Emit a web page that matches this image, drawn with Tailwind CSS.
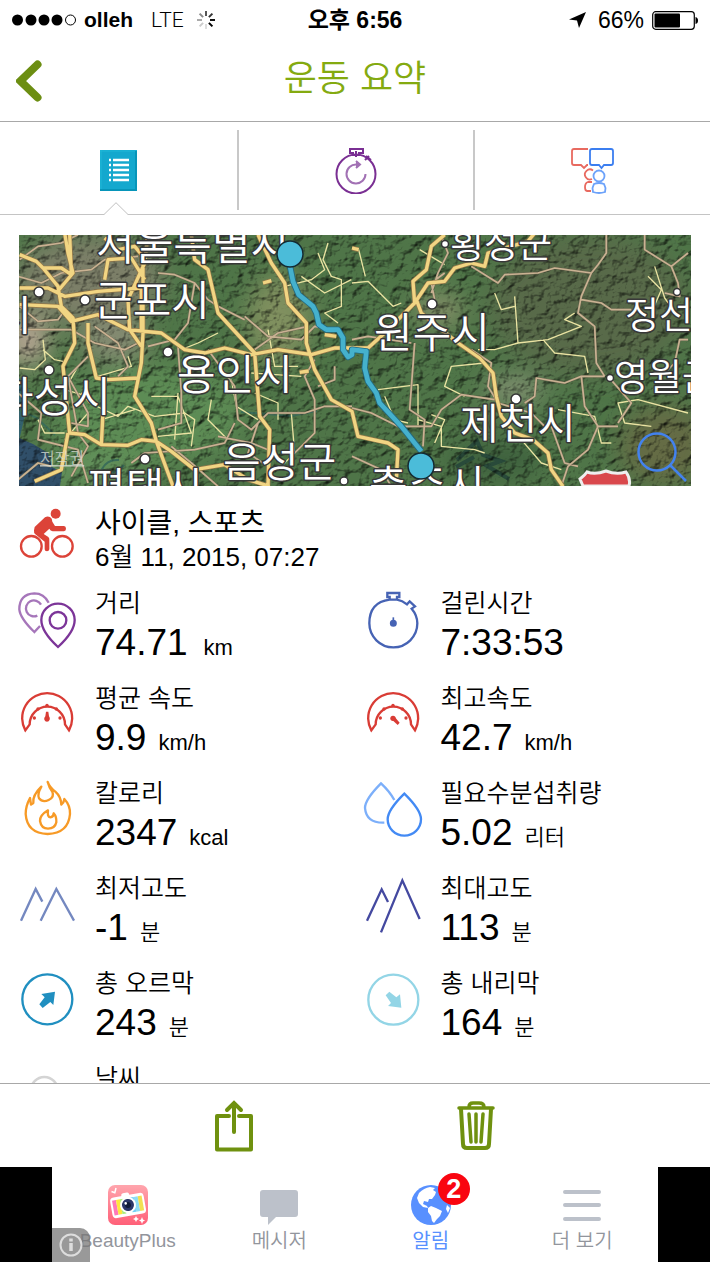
<!DOCTYPE html>
<html lang="ko">
<head>
<meta charset="utf-8">
<meta name="viewport" content="width=device-width, initial-scale=1">
<title>운동 요약</title>
<script src="https://cdn.jsdelivr.net/npm/@tailwindcss/browser@4"></script>
</head>
<body class="bg-white text-black font-['Liberation_Sans','Noto_Sans_CJK_KR',sans-serif]">
<div class="flex h-screen flex-col overflow-hidden">

  <!-- Status bar -->
  <div class="grid h-10 shrink-0 grid-cols-[1fr_auto_1fr] items-center px-3 text-[23px] leading-10">
    <div class="flex items-center">
      <svg class="h-3 w-16" viewBox="0 0 64 12" aria-hidden="true"><circle cx="5.500" cy="6" r="5.500"/><circle cx="19" cy="6" r="5.500"/><circle cx="32" cy="6" r="5.500"/><circle cx="45" cy="6" r="5.500"/><circle cx="58.500" cy="6" r="5" fill="none" stroke="#000"/></svg>
      <span class="ml-2 text-[21px] font-bold">olleh</span>
      <span class="ml-[18px] font-['Roboto'] text-[21px] font-light">LTE</span>
      <svg class="ml-3 size-5" viewBox="0 0 20 20" stroke-width="2" fill="none" aria-hidden="true"><path d="M10 1v5" stroke="#555"/><path d="M16.400 3.600l-3.500 3.500" stroke="#333"/><path d="M19 10h-5" stroke="#111"/><path d="M16.400 16.400l-3.500-3.500" stroke="#000"/><path d="M10 19v-5" stroke="#ddd"/><path d="M3.600 16.400l3.500-3.500" stroke="#ccc"/><path d="M1 10h5" stroke="#aaa"/><path d="M3.600 3.600l3.500 3.500" stroke="#888"/></svg>
    </div>
    <div class="font-bold">오후 6:56</div>
    <div class="flex items-center justify-end">
      <svg class="mr-3 h-4 w-[17px]" viewBox="0 0 17 16" aria-hidden="true"><path d="M17 0L0 7.500L8 8.500L10 16Z"/></svg>
      <span>66%</span>
      <svg class="ml-2 h-[19px] w-[46px]" viewBox="0 0 46 19" aria-hidden="true"><rect x=".7" y=".7" width="41.600" height="17.600" rx="3" fill="none" stroke="#000" stroke-width="1.200"/><rect x="2.500" y="2.500" width="25.500" height="14" rx="1"/><path d="M43.500 6q2.500.5 2.500 3.500t-2.500 3.500z"/></svg>
    </div>
  </div>

  <!-- Title bar -->
  <header class="grid h-[82px] shrink-0 grid-cols-[60px_1fr_60px] items-center border-b border-[#a8a8a8]">
    <button type="button" aria-label="뒤로" class="flex h-full items-center pl-4"><svg class="h-[42px] w-[26px]" viewBox="0 0 26 42"><path d="M21.500 4.500L4.500 21L21.500 37.500" fill="none" stroke="#6c8e12" stroke-width="8" stroke-linecap="round" stroke-linejoin="miter"/></svg></button>
    <h1 class="pb-1 text-center text-[36px] font-[350] leading-[44px] text-[#84aa10]">운동 요약</h1>
  </header>

  <!-- Section tabs -->
  <nav class="relative grid h-[93px] shrink-0 grid-cols-3 border-b border-[#c4c4c4] pt-2 pb-1">
    <button type="button" aria-label="요약" class="flex items-center justify-center">
      <svg class="h-[41px] w-[37px]" viewBox="0 0 37 41"><path fill="#14a8ce" d="M0 0h37v41H0z"/><path d="M0 1h37M1 0v41" stroke="#1fb8d8" stroke-width="1"/><path d="M36 1v39H0" stroke="#0795b9" fill="none" stroke-width="2"/><path d="M9 10h2M13 10h16M9 15h2M13 15h16M9 20h2M13 20h16M9 25h2M13 25h16M9 30h2M13 30h16" stroke="#fff" stroke-width="2.400"/></svg>
    </button>
    <button type="button" aria-label="랩 타임" class="flex items-center justify-center border-l-2 border-[#c8c8c8]">
      <svg class="h-[47px] w-[42px]" viewBox="0 0 42 47" fill="none" stroke="#7a2f93" stroke-width="2"><circle cx="21" cy="27" r="19.500"/><path d="M15 2h13v4h-4v2h-6v-2h-3zM21 4v6" /><path d="M31 9l5 4M30 13l4-4"/><g stroke="#a271b4"><path d="M21.500 17.500A9.500 9.500 0 1 0 30.500 27"/><path d="M21 14l4 3.500L21 21" fill="#a271b4"/></g></svg>
    </button>
    <button type="button" aria-label="소셜" class="flex items-center justify-center border-l-2 border-[#c8c8c8]">
      <svg class="h-[47px] w-[44px]" viewBox="0 0 44 47" fill="none" stroke-width="1.800"><g stroke="#e86a60"><path d="M17 2H3Q1 2 1 4V16Q1 18 3 18H10L13 21L16 18H17"/><path d="M22 23.500A5 5 0 1 0 21 32M21 35H17Q14 36 14 40Q14 44 16 44H20"/></g><path d="M21 2H40Q42 2 42 4V16Q42 18 40 18H33L30.500 21L28 18H21Q19 18 19 16V4Q19 2 21 2Z" stroke="#3b7ef0"/><g stroke="#6ca2fa"><circle cx="28" cy="29" r="5.500"/><path d="M23 37Q28 35 33 37L34.500 41L34 45Q28 47 22 45L21.500 41Z"/></g></svg>
    </button>
    <svg class="absolute -bottom-px left-[calc(16.666%-14px)] h-[13px] w-6" viewBox="0 0 24 13" aria-hidden="true"><path d="M0 12.500L12 .7L24 12.500V13H0Z" fill="#fff"/><path d="M0 12.500L12 .7L24 12.500" fill="none" stroke="#c0c0c0"/></svg>
  </nav>

  <!-- Workout summary -->
  <main class="min-h-0 flex-1 overflow-y-auto pt-5 [scrollbar-width:none]">
    <div class="px-[19px]">
      <svg class="block h-[251px] w-full" viewBox="0 0 672 251" preserveAspectRatio="xMidYMid slice" role="img" aria-label="운동 경로 지도">
        <defs>
          <filter id="terrain" x="0" y="0" width="100%" height="100%" color-interpolation-filters="sRGB">
            <feTurbulence type="fractalNoise" baseFrequency=".09 .11" numOctaves="4" seed="8" result="n"/>
            <feDiffuseLighting in="n" surfaceScale="3" diffuseConstant="1.250" lighting-color="#fff" result="l"><feDistantLight azimuth="225" elevation="52"/></feDiffuseLighting>
            <feBlend in="SourceGraphic" in2="l" mode="multiply"/>
          </filter>
          <filter id="soft" x="-30%" y="-30%" width="160%" height="160%"><feGaussianBlur stdDeviation="12"/></filter>
        </defs>
        <g filter="url(#terrain)">
          <rect width="672" height="251" fill="#4f7548"/>
          <g filter="url(#soft)">
            <ellipse cx="70" cy="45" rx="75" ry="45" fill="#7c7f68"/><ellipse cx="8" cy="105" rx="22" ry="26" fill="#b5a592"/><ellipse cx="95" cy="105" rx="35" ry="22" fill="#858b72"/><ellipse cx="260" cy="85" rx="32" ry="45" fill="#80905e"/><ellipse cx="130" cy="180" rx="95" ry="50" fill="#5d8c54"/><ellipse cx="60" cy="235" rx="60" ry="20" fill="#62905a"/><ellipse cx="420" cy="75" rx="25" ry="15" fill="#8b936c"/><ellipse cx="495" cy="155" rx="30" ry="12" fill="#8a9478"/><ellipse cx="570" cy="70" rx="100" ry="70" fill="#586a48"/><ellipse cx="645" cy="210" rx="45" ry="40" fill="#656c45"/><ellipse cx="475" cy="225" rx="50" ry="18" fill="#3c603c"/>
          </g>
          <path d="M0 143L10 155L6 180L0 206Z" fill="#33616d"/><path d="M0 203L14 209L29 218L33 232L43 237L41 251H0Z" fill="#304f69"/>
          <path d="M438 225L458 206L464 220L482 226L468 231L490 244M455 222L437 232" fill="none" stroke="#294a3a" stroke-width="4"/>
          <path d="M100 225q-12-1-17 9q12 8 22-4M0 175l18 8l18 17M222 177l50 4l26-5" fill="none" stroke="#3b6d59" stroke-width="2"/>
        </g>

        <!-- Roads: traced at three units per map pixel -->
        <g transform="translate(-1 -2) scale(.333333)" fill="none" stroke-linejoin="round">
          <g stroke="#eae3a2" stroke-width="4">
            <path d="M75 320L82 380L50 410L5 405M75 350L110 380L135 385M190 480L215 510L300 550L330 520L410 550M330 370L340 400L240 430M410 550L500 540L530 560L520 640M580 500L570 560L630 620M400 490H480L520 600L420 610M600 300L540 330L490 350M900 60L920 110L880 140L800 160M930 30L915 80L940 130L970 140V220L920 240L960 270M640 440L655 520L720 560M820 540L830 660L790 700M710 480L780 510V560M700 420L850 430M180 400L140 470L210 490M60 560L80 600L140 600M750 290L770 400L840 400M210 540L140 620M1000 140L920 180L850 130M480 480L470 620M350 530L250 560"/>
            <path d="M1002 150L1050 145L1125 220L1150 210M1022 50L1042 130M1205 50L1280 95M1490 190L1500 330L1430 350L1380 350M1500 330L1590 320L1690 280L1640 260L1670 240M1575 320L1610 360L1700 370L1710 420M1430 180L1450 230L1490 220M1400 390L1300 400L1280 460L1340 490M1080 470L1200 455V580M1900 580L1820 570L1800 510L1860 500L2010 540M1910 100L1940 195L1980 250M1200 560L1270 580V640L1370 650L1400 660M1240 545L1280 560L1250 630M1100 490L1130 560L1170 570M1900 240L1930 170L1890 130M1620 530L1730 550L1750 630L1780 630M1510 620L1570 690L1630 710"/>
          </g>
          <g stroke="#6c6651" stroke-width="7"><path id="minor" d="M5 220L60 265L120 260L145 225M5 80L60 40L130 30L180 5M5 290H160L230 330L320 350L360 330M0 130L70 150L130 120L220 110L260 80L360 70M230 280L300 330L330 400L300 430M210 370L150 430L210 540V580L160 570M420 120L470 125L530 150L570 200L600 220L680 260M530 150L510 270L470 320L390 340M480 340L490 480V570L420 590M570 350L650 460L660 560L700 590L750 540H860L920 520L1002 520M680 250L750 310L850 320L890 280L950 290M950 400V440L900 460M710 350L780 300L870 280M650 570L620 630L530 650L380 660L340 690M0 480L70 540L60 620L180 650L210 750M150 430L180 600L210 640L160 730M460 640L520 690L600 760M720 570L690 660L750 700M890 380L860 430L890 500V600L830 660M1002 320L1050 310L1180 330M1270 10L1290 60L1260 120L1240 180M1250 200L1240 150L1280 120M1360 100L1440 150L1460 125L1560 120L1610 105L1720 120L1690 190L1680 240L1730 280L1735 390L1760 430M1690 200L1750 210L1780 230L1840 230M1765 5V60L1740 95L1720 120M1880 5V50L1960 100L1980 150L1985 190L1940 180M1960 100L2010 60M1760 430L1690 430L1640 450L1555 435L1550 490L1520 510M1690 430L1700 520L1740 580L1710 650L1650 700L1630 760M1190 330L1175 530L1220 560L1215 640M1430 500L1330 485L1270 530L1240 580L1140 580L1060 540L1002 525M1600 580L1640 690L1680 700M2010 320H1985L1970 390L1930 430M1770 430L1840 510L1800 570M1360 350L1420 390L1410 460L1440 510L1540 540L1580 580M0 740L60 690L100 700M600 610L700 630L750 650M1002 670L1090 710L1120 760M1740 580L1800 580"/></g>
          <use href="#minor" stroke="#c9b292" stroke-width="5"/>
          <g stroke="#937749" stroke-width="14"><path id="major" d="M5 65L55 85L75 105H130L160 125L155 5M5 165H90L140 190L240 175L370 165V300M75 105L120 160L130 220L165 255L170 330L135 400L155 600L200 605L250 635L330 637L370 620L415 625L460 655L530 710L620 695L690 740L755 760M140 0L150 60L165 120L115 180M260 15L300 50L350 40L375 70V300L370 390L350 490L400 570L415 625L465 760M5 215L120 220L160 265L240 245L330 290L430 300L500 350L560 360L620 345L700 365L780 350L880 365L950 345H1002L1050 345L1100 300L1190 210L1185 145L1225 110L1240 40L1280 5M520 5L530 80L570 110L600 240L710 360L725 550L755 590L750 760M720 5L760 90L800 150L810 210L865 270V330L890 410L940 500L1002 535L1020 610L1110 630L1140 650L1135 740M210 270V330L235 435L270 440L360 435M260 440L250 635M390 5L380 90L330 200L335 290L370 340M260 140L270 80L340 75L380 140M150 600L130 710L50 745M1190 210L1230 150L1280 145L1310 105L1360 90L1400 100L1410 60L1530 25L1550 0M1195 200L1210 240L1320 330L1385 375L1425 420L1435 490L1450 550L1490 600L1545 620L1590 660L1600 710L1635 760M1002 45L1022 50M735 150L760 143M845 418L872 414M920 305L955 310"/></g>
          <use href="#major" stroke="#f1d583" stroke-width="10"/>
          <g stroke="#236980" stroke-width="19"><path id="route" d="M815 95L825 145L842 185L885 220L895 240L903 275L925 290L960 290L975 315V350L990 372L1002 365V350L1045 355L1040 405L1050 445L1075 480L1085 510L1150 580L1210 655"/></g>
          <use href="#route" stroke="#45b1cd" stroke-width="14"/>
        </g>

        <g fill="#fff" stroke="#333" stroke-width="1.500"><circle cx="20" cy="57" r="5"/><circle cx="66" cy="65" r="5"/><circle cx="149" cy="117" r="5"/><circle cx="30" cy="135" r="5"/><circle cx="126" cy="224" r="5"/><circle cx="413" cy="69" r="5"/><circle cx="426" cy="9" r="3.500"/><circle cx="497" cy="164" r="5"/><circle cx="591" cy="143" r="3.500"/><circle cx="658" cy="57" r="3.500"/><circle cx="325" cy="246" r="4"/></g>
        <g class="font-[350]" fill="#fff" stroke="#383838" stroke-width="3" stroke-linejoin="round" paint-order="stroke" font-size="42">
          <text x="77" y="25">서울특별시</text>
          <text x="75" y="81">군포시</text>
          <text x="-103" y="96">안산시</text>
          <text x="158" y="155">용인시</text>
          <text x="-24" y="177">화성시</text>
          <text x="68" y="268">평택시</text>
          <text x="204" y="242" font-size="41">음성군</text>
          <text x="355" y="113">원주시</text>
          <text x="441" y="204">제천시</text>
          <text x="350" y="266">충주시</text>
          <g font-size="37"><text x="431" y="23">횡성군</text><text x="606" y="94">정선군</text><text x="595" y="156">영월군</text></g>
        </g>
        <text x="21" y="229" font-size="16" fill="#d8ddd5" fill-opacity=".75" text-decoration="underline">저작권</text>
        <path d="M561 244Q566 240 568 237Q576 240 587 236Q597 240 607 237Q612 244 610 251H564Z" fill="#d9484c" stroke="#eee" stroke-width="3"/>
        <g fill="#4bbcd9" stroke="#142b32" stroke-width="1.500"><circle cx="271" cy="19" r="13"/><circle cx="402" cy="231" r="13"/></g>
        <g fill="none" stroke="#4382ee" stroke-width="2.500"><circle cx="638" cy="217" r="18.500"/><path d="M651 230L667 246"/></g>
      </svg>
    </div>

    <section class="mt-[19px] flex gap-[18px] pl-[17px]">
      <svg class="size-[60px] shrink-0" viewBox="51 30 180 180" aria-hidden="true"><g fill="none" stroke="#dc4338" stroke-width="7"><circle cx="94" cy="154" r="31"/><circle cx="187" cy="154" r="31"/></g><g fill="#dc4338"><circle cx="167" cy="56" r="15"/><path d="M104 96L135 67Q142 62 150 66Q157 70 157 80L165 93H192Q198 94 198 101Q198 108 192 109H158Q151 107 148 101L131 117L145 126Q149 130 148 137V163Q147 169 141 169Q134 169 134 163V140L106 118Q101 114 102 106Z"/></g></svg>
      <div>
        <h2 class="text-[28px] leading-[38px]">사이클, 스포츠</h2>
        <p class="text-[26px] font-[350] leading-[28px]">6월 11, 2015, 07:27</p>
      </div>
    </section>

    <dl class="mt-[18px] grid auto-rows-[95px] grid-cols-2 pr-[2px] pl-[17px]">
      <div class="grid grid-cols-[60px_1fr] grid-rows-[29px_50px] gap-x-[18px]">
        <svg class="row-span-2 size-[60px]" viewBox="51 285 180 180" fill="none" stroke-width="7" aria-hidden="true"><g stroke="#a676ba"><path d="M146 326Q132 298 103 298Q58 300 58 346Q60 372 103 414L120 396"/><path d="M123 332A24 24 0 1 0 112 365"/></g><g stroke="#7c3598"><path d="M174 459Q124 413 124 378A50 49 0 0 1 224 378Q224 413 174 459Z"/><circle cx="174" cy="379" r="25"/></g></svg>
        <dt class="text-[25px] font-[350] leading-[29px]">거리</dt>
        <dd class="flex items-baseline gap-4 text-[37px] leading-[50px]">74.71 <span class="text-[22px] font-[350]">km</span></dd>
      </div>
      <div class="grid grid-cols-[60px_1fr] grid-rows-[29px_50px] gap-x-[18px]">
        <svg class="row-span-2 size-[60px]" viewBox="38 30 180 180" fill="none" stroke="#4663b4" stroke-width="7" aria-hidden="true"><path d="M118 62Q57 70 57 133A72 72 0 0 0 201 133Q201 109 184 89L194 82L178 67L170 76Q156 65 140 62V54H147V42H111V54H118V62H140"/><circle cx="129" cy="133" r="7" fill="#4663b4"/><path d="M129 130V115" stroke-width="5"/></svg>
        <dt class="text-[25px] font-[350] leading-[29px]">걸린시간</dt>
        <dd class="flex items-baseline gap-3 text-[37px] leading-[50px]">7:33:53</dd>
      </div>

      <div class="grid grid-cols-[60px_1fr] grid-rows-[29px_50px] gap-x-[18px]">
        <svg class="row-span-2 size-[60px]" viewBox="51 45 180 180" fill="none" stroke="#d93c35" stroke-width="7" aria-hidden="true"><path d="M76 184A75 75 0 1 1 207 184L195 166A53 53 0 1 0 89 166Z"/><g fill="#d93c35" stroke="none"><circle cx="103" cy="147" r="5"/><circle cx="114" cy="120" r="5"/><circle cx="141" cy="109" r="5"/><circle cx="169" cy="120" r="5"/><circle cx="180" cy="147" r="5"/><path d="M138 128H145L147 142Q151 147 149 152Q147 158 141 158Q135 158 133 152Q131 147 136 142Z"/></g></svg>
        <dt class="text-[25px] font-[350] leading-[29px]">평균 속도</dt>
        <dd class="flex items-baseline gap-3 text-[37px] leading-[50px]">9.9 <span class="text-[22px] font-[350]">km/h</span></dd>
      </div>
      <div class="grid grid-cols-[60px_1fr] grid-rows-[29px_50px] gap-x-[18px]">
        <svg class="row-span-2 size-[60px]" viewBox="38 315 180 180" fill="none" stroke="#d93c35" stroke-width="7" aria-hidden="true"><path d="M63 454A75 75 0 1 1 194 454L182 436A53 53 0 1 0 76 436Z"/><g fill="#d93c35" stroke="none"><circle cx="90" cy="417" r="5"/><circle cx="101" cy="390" r="5"/><circle cx="128" cy="379" r="5"/><circle cx="156" cy="390" r="5"/><circle cx="167" cy="417" r="5"/><circle cx="128" cy="418" r="8"/><path d="M126 423L134 415L148 431L142 438Z"/></g></svg>
        <dt class="text-[25px] font-[350] leading-[29px]">최고속도</dt>
        <dd class="flex items-baseline gap-3 text-[37px] leading-[50px]">42.7 <span class="text-[22px] font-[350]">km/h</span></dd>
      </div>

      <div class="grid grid-cols-[60px_1fr] grid-rows-[29px_50px] gap-x-[18px]">
        <svg class="row-span-2 size-[60px]" viewBox="51 329 180 180" fill="none" stroke="#f79a26" stroke-width="7" stroke-linejoin="round" aria-hidden="true"><path d="M143 338Q149 355 166 367Q183 382 184 406Q192 400 193 389Q211 408 210 434Q205 492 143 494Q81 492 77 434Q77 410 90 386L93 406L100 401Q97 378 124 352Q111 375 117 387Q128 401 146 392Q164 383 157 367Q147 354 143 338Z"/><path d="M144 423Q119 438 120 455Q124 478 144 478Q165 478 169 459Q170 442 161 432Q161 443 151 444Q141 443 144 423Z"/></svg>
        <dt class="text-[25px] font-[350] leading-[29px]">칼로리</dt>
        <dd class="flex items-baseline gap-3 text-[37px] leading-[50px]">2347 <span class="text-[22px] font-[350]">kcal</span></dd>
      </div>
      <div class="grid grid-cols-[60px_1fr] grid-rows-[29px_50px] gap-x-[18px]">
        <svg class="row-span-2 size-[60px]" viewBox="38 43 180 180" fill="none" stroke-width="7" aria-hidden="true"><path d="M132 106Q118 80 92 56Q44 104 44 130Q48 176 102 174" stroke="#7caffa"/><path d="M162 87Q112 136 112 164A50 49 0 0 0 212 164Q212 136 162 87Z" stroke="#438af4"/></svg>
        <dt class="text-[25px] font-[350] leading-[29px]">필요수분섭취량</dt>
        <dd class="flex items-baseline gap-3 text-[37px] leading-[50px]">5.02 <span class="text-[22px] font-[350]">리터</span></dd>
      </div>

      <div class="grid grid-cols-[60px_1fr] grid-rows-[29px_50px] gap-x-[18px]">
        <svg class="row-span-2 size-[60px]" viewBox="51 27 180 180" fill="none" stroke="#7488c0" stroke-width="7" aria-hidden="true"><path d="M63 167L107 72L127 110M122 167L169 72L222 167"/></svg>
        <dt class="text-[25px] font-[350] leading-[29px]">최저고도</dt>
        <dd class="flex items-baseline gap-3 text-[37px] leading-[50px]">-1 <span class="text-[22px] font-[350]">분</span></dd>
      </div>
      <div class="grid grid-cols-[60px_1fr] grid-rows-[29px_50px] gap-x-[18px]">
        <svg class="row-span-2 size-[60px]" viewBox="38 327 180 180" fill="none" stroke="#4449a0" stroke-width="7" aria-hidden="true"><path d="M50 467L94 373L113 411M92 502L156 346L208 462"/></svg>
        <dt class="text-[25px] font-[350] leading-[29px]">최대고도</dt>
        <dd class="flex items-baseline gap-3 text-[37px] leading-[50px]">113 <span class="text-[22px] font-[350]">분</span></dd>
      </div>

      <div class="grid grid-cols-[60px_1fr] grid-rows-[29px_50px] gap-x-[18px]">
        <svg class="row-span-2 size-[60px]" viewBox="51 310 180 180" fill="none" stroke="#208fc0" stroke-width="7" aria-hidden="true"><circle cx="142" cy="401" r="75"/><path d="M165 378L160 418L151 409L128 427L118 416L134 395L124 385Z" fill="#208fc0" stroke="none"/></svg>
        <dt class="text-[25px] font-[350] leading-[29px]">총 오르막</dt>
        <dd class="flex items-baseline gap-3 text-[37px] leading-[50px]">243 <span class="text-[22px] font-[350]">분</span></dd>
      </div>
      <div class="grid grid-cols-[60px_1fr] grid-rows-[29px_50px] gap-x-[18px]">
        <svg class="row-span-2 size-[60px]" viewBox="38 25 180 180" fill="none" stroke="#93d5e6" stroke-width="7" aria-hidden="true"><circle cx="129" cy="117" r="75"/><path d="M153 141L113 136L122 127L106 104L117 93L138 110L149 101Z" fill="#93d5e6" stroke="none"/></svg>
        <dt class="text-[25px] font-[350] leading-[29px]">총 내리막</dt>
        <dd class="flex items-baseline gap-3 text-[37px] leading-[50px]">164 <span class="text-[22px] font-[350]">분</span></dd>
      </div>

      <div class="grid grid-cols-[60px_1fr] grid-rows-[29px_50px] gap-x-[18px]">
        <svg class="row-span-2 size-[60px]" viewBox="51 594 180 180" fill="none" stroke="#d4d4d4" stroke-width="8" aria-hidden="true"><circle cx="133" cy="673" r="40"/></svg>
        <dt class="text-[25px] font-[350] leading-[29px]">날씨</dt>
      </div>
    </dl>
  </main>

  <!-- Actions -->
  <div class="flex h-[84px] shrink-0 items-center justify-center border-t border-[#a8a8a8]">
    <button type="button" aria-label="공유" class="flex w-[242px] justify-center"><svg class="h-[52px] w-10" viewBox="0 0 40 52" fill="none" stroke="#6f910f" stroke-width="4"><path d="M15 16H3V49.500H37V16H25" stroke-linejoin="round" stroke-linecap="round"/><path d="M20 32V4M13 10L20 3L27 10" stroke-linecap="round"/></svg></button>
    <button type="button" aria-label="삭제" class="flex w-[242px] justify-center"><svg class="h-[50px] w-[38px]" viewBox="0 0 38 50" fill="none" stroke="#6f910f" stroke-width="4" stroke-linejoin="round" stroke-linecap="round"><path d="M2 7H36M12 6Q12 2 16 2H22Q27 2 27 6" stroke-width="3.500"/><path d="M4 8L6 43Q6 47 10 47H28Q32 47 32 43L34 8"/><path d="M12 13L14 41M19 13V41M26 13L24 41" stroke-width="3.500"/></svg></button>
  </div>

  <!-- Banner -->
  <footer class="h-[95px] shrink-0 bg-black px-[52px]">
    <div class="relative grid h-full grid-cols-4 bg-white pt-[18px] text-[20px] leading-8 text-[#92959c]">
      <a href="#" class="flex flex-col items-center text-[19px]">
        <svg class="size-10" viewBox="0 0 40 40"><defs><linearGradient id="pink" x2="0" y2="1"><stop stop-color="#ffa5ad"/><stop offset="1" stop-color="#ff6078"/></linearGradient></defs><rect width="40" height="40" rx="7" fill="url(#pink)"/><path d="M3.500 6.500l4 1.500M8 3l-1 4" stroke="#fff" stroke-width="1.500"/><path d="M28 31l1 2l2 1l-2 1l-1 2l-1-2l-2-1l2-1zM34 32l1 2.500l2 1l-2 1l-1 2.500l-1-2.500l-2-1l2-1z" fill="#fff"/><g transform="rotate(-10 20 20)"><rect x="15" y="7.500" width="8" height="5" rx="2" fill="#fff"/><rect x="3" y="10" width="34" height="21" rx="4" fill="#fff"/><path d="M5 13h4v15H5z" fill="#ff78b8"/><path d="M9 13h4v15H9z" fill="#ffe63d"/><path d="M13 13h4v15h-4z" fill="#a8ec78"/><path d="M23 13h4v15h-4z" fill="#73cff6"/><path d="M27 13h4v15h-4z" fill="#8edcf5"/><path d="M31 13h4v15h-4z" fill="#f2e052"/><circle cx="20" cy="20" r="8" fill="#fff"/><circle cx="20" cy="20" r="6" fill="#2b3769"/><circle cx="20" cy="20" r="3" fill="#111c39"/><circle cx="18" cy="18" r="1.300" fill="#fff"/></g></svg>
        BeautyPlus
      </a>
      <a href="#" class="flex flex-col items-center font-[350]"><svg class="size-10" viewBox="0 0 40 40"><path d="M4 5H36Q39 5 39 8V29Q39 32 36 32H17L9 40V32H4Q1 32 1 29V8Q1 5 4 5Z" fill="#bcc1ca"/></svg>메시저</a>
      <a href="#" class="flex flex-col items-center text-[#5890ff]">
        <span class="relative">
          <svg class="size-10" viewBox="0 0 40 40"><circle cx="20" cy="20" r="20" fill="#5890ff"/><path d="M8 8Q13 3 19 2L24 3L22 5L25 7L24 10L21 14L18 14L17 17L13 16L12 19L16 21L17 23L12 22L8 18L6 13Z" fill="#fff"/><path d="M17 23L20 21L25 23L31 26L29 31L26 34L23 38L21 36L20 31L17 27Z" fill="#fff"/><path d="M36 20L39 23L37 28L35 24Z" fill="#fff"/></svg>
          <span class="absolute -top-3 left-[27px] flex size-8 items-center justify-center rounded-full bg-[#f90510] text-[27px] font-bold leading-8 text-white">2</span>
        </span>
        알림
      </a>
      <a href="#" class="flex flex-col items-center font-[350]"><svg class="size-10" viewBox="0 0 40 40" stroke="#bcc1ca" stroke-width="4" stroke-linecap="round"><path d="M3 7H37M3 20H37M3 34H37"/></svg>더 보기</a>
      <button type="button" aria-label="광고 정보" class="absolute bottom-0 left-0 flex h-[34px] w-[38px] items-center justify-center rounded-tr-[10px] bg-[#777]/75"><svg class="size-6" viewBox="0 0 24 24" fill="none" stroke="#ddd" stroke-width="2"><circle cx="12" cy="12" r="10.500"/><path d="M12 10V18M12 5.500V8.500" stroke-width="3.500"/></svg></button>
    </div>
  </footer>
</div>
</body>
</html>
